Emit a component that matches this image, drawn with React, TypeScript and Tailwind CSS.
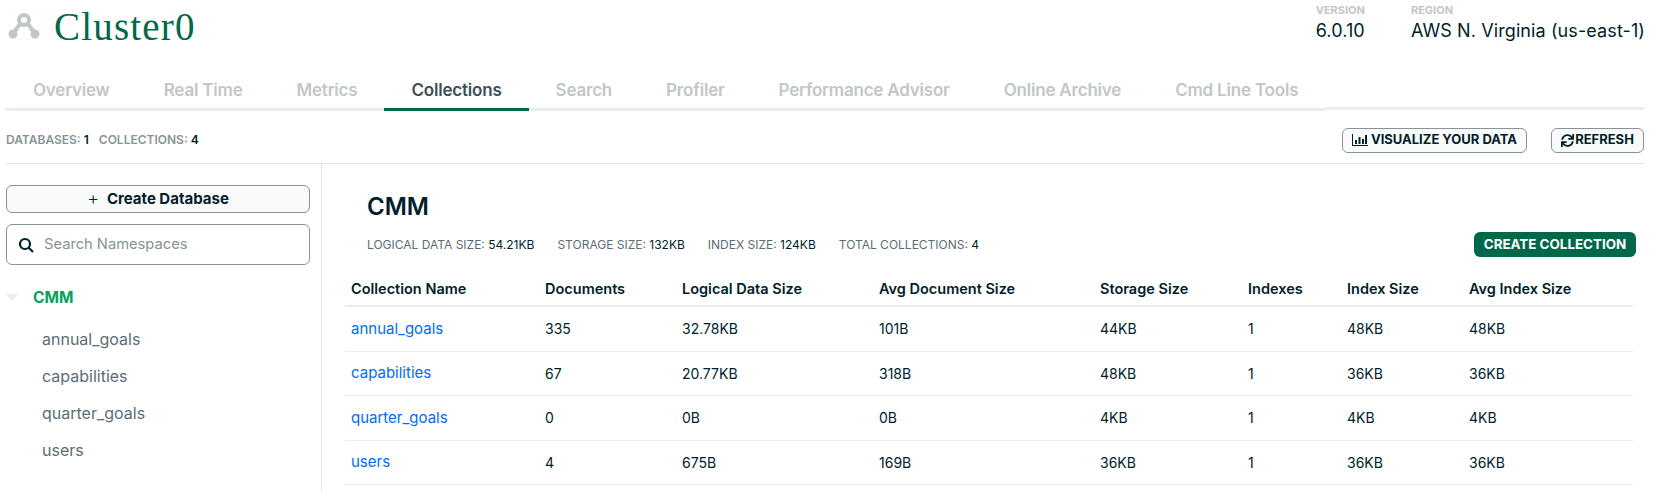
import { FaSync } from 'react-icons/fa'

const tabs = ['Overview', 'Real Time', 'Metrics', 'Collections', 'Search', 'Profiler', 'Performance Advisor', 'Online Archive', 'Cmd Line Tools']

const rows = [
  ['annual_goals', '335', '32.78KB', '101B', '44KB', '1', '48KB', '48KB'],
  ['capabilities', '67', '20.77KB', '318B', '48KB', '1', '36KB', '36KB'],
  ['quarter_goals', '0', '0B', '0B', '4KB', '1', '4KB', '4KB'],
  ['users', '4', '675B', '169B', '36KB', '1', '36KB', '36KB'],
]

const headers = ['Collection Name', 'Documents', 'Logical Data Size', 'Avg Document Size', 'Storage Size', 'Indexes', 'Index Size', 'Avg Index Size']
const stats = [['LOGICAL DATA SIZE:', '54.21KB'], ['STORAGE SIZE:', '132KB'], ['INDEX SIZE:', '124KB'], ['TOTAL COLLECTIONS:', '4']]
const gridCols = 'grid grid-cols-[194px_137px_197px_221px_148px_99px_122px_1fr]'

function ClusterIcon() {
  return (
    <svg width="32" height="26" viewBox="0 0 32 26" className="text-[#c1c7c6]">
      <circle cx="16" cy="7" r="5" fill="none" stroke="currentColor" strokeWidth="4" />
      <path d="M12 11 L5 21 M20 11 L27 21" fill="none" stroke="currentColor" strokeWidth="4" />
      <circle cx="5" cy="21" r="4.5" fill="currentColor" />
      <circle cx="27" cy="21" r="4.5" fill="currentColor" />
    </svg>
  )
}

export default function App() {
  return (
    <div className="h-[492px] overflow-hidden bg-white font-['Inter',sans-serif] text-[#001e2b]">
      <header className="flex h-[66px] justify-between pl-2 pr-[8px]">
        <div className="flex items-start gap-[14px] pt-[7px]">
          <div className="pt-[6px]"><ClusterIcon /></div>
          <div className="font-['Liberation_Serif',serif] text-[39px] leading-[40px] tracking-[1.2px] text-[#00684a]">Cluster0</div>
        </div>
        <div className="flex gap-[46px] pt-1">
          <div>
            <div className="text-[11px] font-bold leading-3 text-[#c1c7c6]">VERSION</div>
            <div className="mt-[3px] text-[18px] leading-6 tracking-[0.1px]">6.0.10</div>
          </div>
          <div>
            <div className="text-[11px] font-bold leading-3 text-[#c1c7c6]">REGION</div>
            <div className="mt-[3px] text-[18px] leading-6 tracking-[0.1px]">AWS N. Virginia (us-east-1)</div>
          </div>
        </div>
      </header>

      <div className="ml-[6px] mr-[9px] flex h-[45px] items-start">
        {tabs.map(t => (
          <div
            key={t}
            className={t === 'Collections'
              ? 'h-[45px] border-b-[3px] border-[#00684a] px-[27px] pt-3 text-[17px] font-semibold leading-6 tracking-[-0.2px] text-[#3d4f58]'
              : 'h-[45px] border-b-[3px] border-[#e8eded] px-[27px] pt-3 text-[17px] font-semibold leading-6 tracking-[-0.2px] text-[#c1c7c6]'}
          >
            {t}
          </div>
        ))}
        <div className="h-[44px] flex-1 border-b-[3px] border-[#e8eded]" />
      </div>

      <div className="ml-[6px] mr-[9px] flex h-[53px] items-center justify-between border-b border-[#e0e4e4] pt-[6px]">
        <div className="flex gap-[10px] text-[12px] font-semibold text-[#889397]">
          <span>DATABASES: <span className="text-[#001e2b]">1</span></span>
          <span>COLLECTIONS: <span className="text-[#001e2b]">4</span></span>
        </div>
        <div className="flex gap-[24px]">
          <button className="flex h-[25px] w-[185px] items-center justify-center gap-[3px] rounded-md border border-[#889397] bg-[#f9fbfa] text-[13px] font-bold">
            <svg width="16" height="12" viewBox="0 0 16 12" fill="#001e2b"><path d="M0 0h1v11h15v1H0zM3 6h2v4H3zM6.5 3h2v7h-2zM10 5h2v5h-2zM13 1h2v9h-2z" /></svg>
            VISUALIZE YOUR DATA
          </button>
          <button className="flex h-[25px] w-[93px] items-center justify-center gap-[1px] rounded-md border border-[#889397] bg-[#f9fbfa] text-[13px] font-bold">
            <FaSync size={13} color="#001e2b" />
            REFRESH
          </button>
        </div>
      </div>

      <div className="flex h-[328px]">
        <aside className="w-[322px] shrink-0 border-r border-[#e0e4e4] pl-[6px] pr-[11px] pt-[21px]">
          <button className="flex h-7 w-full items-center justify-center gap-2 rounded-md border border-[#889397] bg-[#f9fbfa] text-[15px] font-bold">
            <span className="text-[18px] font-light leading-none">+</span> Create Database
          </button>
          <div className="mt-[11px] flex h-[41px] items-center gap-[10px] rounded-md border border-[#889397] px-[11px]">
            <svg width="16" height="16" viewBox="0 0 16 16" fill="none" stroke="#001e2b" strokeWidth="2.2"><circle cx="7" cy="7" r="5" /><path d="M10.5 10.5 15 15" /></svg>
            <span className="text-[14.7px] text-[#889397]">Search Namespaces</span>
          </div>
          <div className="mt-[21px] flex items-center gap-[15px]">
            <div className="h-0 w-0 border-x-[6px] border-t-[7px] border-x-transparent border-t-[#e8eded]" />
            <span className="text-[15.5px] font-bold text-[#00a35c]">CMM</span>
          </div>
          <div className="mt-[19px] flex flex-col gap-[15px] pl-9 text-[16px] leading-[22px] text-[#5c6c75]">
            <div>annual_goals</div>
            <div>capabilities</div>
            <div>quarter_goals</div>
            <div>users</div>
          </div>
        </aside>

        <main className="flex-1 pl-[23px] pr-[20px]">
          <h1 className="pl-[22px] pt-[29px] text-[24px] font-semibold leading-7">CMM</h1>
          <div className="mt-[10px] flex h-[28px] items-center justify-between pl-[22px]">
            <div className="flex gap-[23px] text-[12px] text-[#5c6c75]">
              {stats.map(([k, v]) => (
                <span key={k}>{k} <span className="text-[#001e2b]">{v}</span></span>
              ))}
            </div>
            <button className="mb-[2px] mr-[-3px] h-[25px] w-[162px] rounded-md bg-[#00684a] text-[13.4px] font-bold text-white">CREATE COLLECTION</button>
          </div>
          <div className={`${gridCols} mt-[12px] h-[36px] items-center border-b-2 border-[#e8eded] pl-[6px] pt-[2px] text-[14.5px] font-semibold`}>
            {headers.map(h => <div key={h}>{h}</div>)}
          </div>
          {rows.map(r => (
            <div key={r[0]} className={`${gridCols} h-[44.6px] items-center border-b border-[#e8eded] pl-[6px] text-[14px]`}>
              {r.map((c, i) => <div key={i} className={i === 0 ? 'text-[15px] text-[#016bf8]' : ''}>{c}</div>)}
            </div>
          ))}
        </main>
      </div>
    </div>
  )
}
